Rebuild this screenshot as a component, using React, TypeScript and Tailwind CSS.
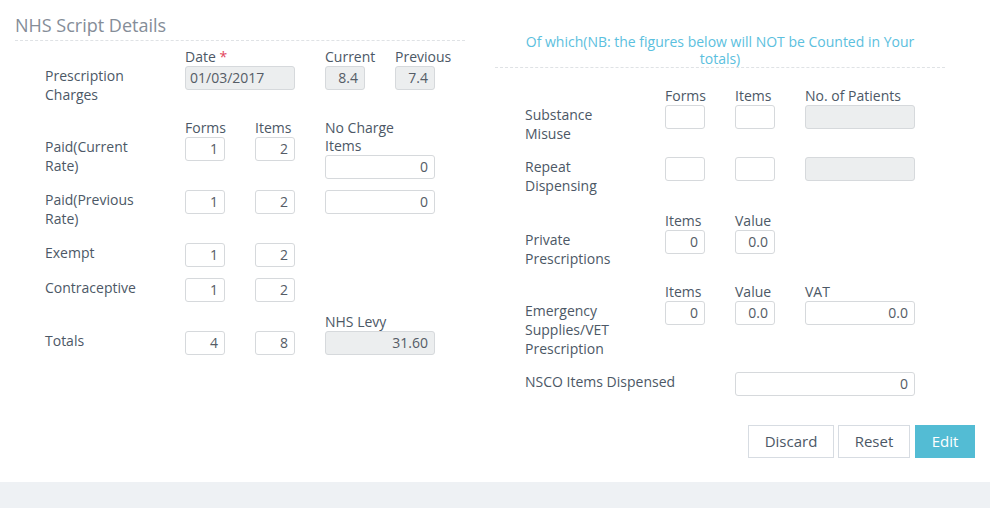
import React from "react";

const font = { fontFamily: '"Open Sans", "Noto Sans", Arial, sans-serif' };

type CellProps = {
  w: "sm" | "lg" | "xl";
  head?: React.ReactNode;
  value?: string;
  disabled?: boolean;
  left?: boolean;
};

function Cell({ w, head, value = "", disabled, left }: CellProps) {
  const width = w === "sm" ? "w-[40px]" : w === "lg" ? "w-[110px]" : "w-[180px]";
  return (
    <div className={`flex flex-col ${width}`}>
      {head && <div className="leading-[18px] whitespace-nowrap">{head}</div>}
      <div
        className={`h-[24px] border border-[#d6d9dc] rounded-[3px] text-[14px] leading-[22px] text-[#555c66] ${
          left ? "text-left pl-[4px]" : "text-right pr-[6px]"
        } ${disabled ? "bg-[#eceeef]" : "bg-white"}`}
      >
        {value}
      </div>
    </div>
  );
}

function Row({
  label,
  pad,
  className = "",
  wide,
  children,
}: {
  label: React.ReactNode;
  pad?: boolean;
  className?: string;
  wide?: boolean;
  children: React.ReactNode;
}) {
  return (
    <div className={`flex items-start ${className}`}>
      <div className={`${wide ? "w-[210px]" : "w-[140px]"} shrink-0 leading-[19px] ${pad ? "pt-[18px]" : ""}`}>
        {label}
      </div>
      <div className="flex items-start gap-[30px]">{children}</div>
    </div>
  );
}

export default function App() {
  return (
    <div className="w-[990px] h-[508px] bg-[#eef1f4] text-[14px] text-[#4c5866]" style={font}>
      <div className="h-[482px] bg-white px-[15px]">
        <div className="flex items-start gap-[30px]">
          {/* left column */}
          <div className="w-[450px]">
            <div className="pt-[13px] pb-[3px] text-[18px] leading-[24px] text-[#858d98] border-b border-dashed border-[#dfe2e5]">
              NHS Script Details
            </div>
            <div className="pl-[30px]">
              <Row label={<>Prescription<br />Charges</>} pad className="mt-[7px]">
                <div className="w-[110px]">
                  <Cell
                    w="lg"
                    head={<>Date <span className="text-[#e2445c]">*</span></>}
                    value="01/03/2017"
                    disabled
                    left
                  />
                </div>
                <Cell w="sm" head="Current" value="8.4" disabled />
                <Cell w="sm" head="Previous" value="7.4" disabled />
              </Row>
              <Row label={<>Paid(Current<br />Rate)</>} pad className="mt-[15px]">
                <Cell w="sm" head="Forms" value="1" />
                <Cell w="sm" head="Items" value="2" />
                <Cell w="lg" head={<>No Charge<br />Items</>} value="0" />
              </Row>
              <Row label={<>Paid(Previous<br />Rate)</>} className="mt-[11px]">
                <Cell w="sm" value="1" />
                <Cell w="sm" value="2" />
                <Cell w="lg" value="0" />
              </Row>
              <Row label="Exempt" className="mt-[15px]">
                <Cell w="sm" value="1" />
                <Cell w="sm" value="2" />
              </Row>
              <Row label="Contraceptive" className="mt-[11px]">
                <Cell w="sm" value="1" />
                <Cell w="sm" value="2" />
              </Row>
              <Row label="Totals" pad className="mt-[11px]">
                <Cell w="sm" head={<>&nbsp;</>} value="4" />
                <Cell w="sm" head={<>&nbsp;</>} value="8" />
                <Cell w="lg" head="NHS Levy" value="31.60" disabled />
              </Row>
            </div>
          </div>

          {/* right column */}
          <div className="w-[450px]">
            <div className="pt-[33px] text-center leading-[17px] text-[#5bc0de] border-b border-dashed border-[#dfe2e5]">
              Of which(NB: the figures below will NOT be Counted in Your
              <br />
              totals)
            </div>
            <div className="pl-[30px]">
              <Row label={<>Substance<br />Misuse</>} pad className="mt-[19px]">
                <Cell w="sm" head="Forms" />
                <Cell w="sm" head="Items" />
                <Cell w="lg" head="No. of Patients" disabled />
              </Row>
              <Row label={<>Repeat<br />Dispensing</>} className="mt-[14px]">
                <Cell w="sm" />
                <Cell w="sm" />
                <Cell w="lg" disabled />
              </Row>
              <Row label={<>Private<br />Prescriptions</>} pad className="mt-[17px]">
                <Cell w="sm" head="Items" value="0" />
                <Cell w="sm" head="Value" value="0.0" />
              </Row>
              <Row label={<>Emergency<br />Supplies/VET<br />Prescription</>} pad className="mt-[15px]">
                <Cell w="sm" head="Items" value="0" />
                <Cell w="sm" head="Value" value="0.0" />
                <Cell w="lg" head="VAT" value="0.0" />
              </Row>
              <Row label="NSCO Items Dispensed" wide className="mt-[14px]">
                <Cell w="xl" value="0" />
              </Row>
            </div>
          </div>
        </div>

        <div className="mt-[29px] flex justify-end gap-[4px] text-[15px]">
          <button className="h-[33px] w-[86px] border border-[#d7dce2] bg-white text-[#4c5866]">Discard</button>
          <button className="h-[33px] w-[72px] border border-[#d7dce2] bg-white text-[#4c5866] mr-[1px]">Reset</button>
          <button className="h-[33px] w-[60px] bg-[#53bcd4] text-white">Edit</button>
        </div>
      </div>
    </div>
  );
}
